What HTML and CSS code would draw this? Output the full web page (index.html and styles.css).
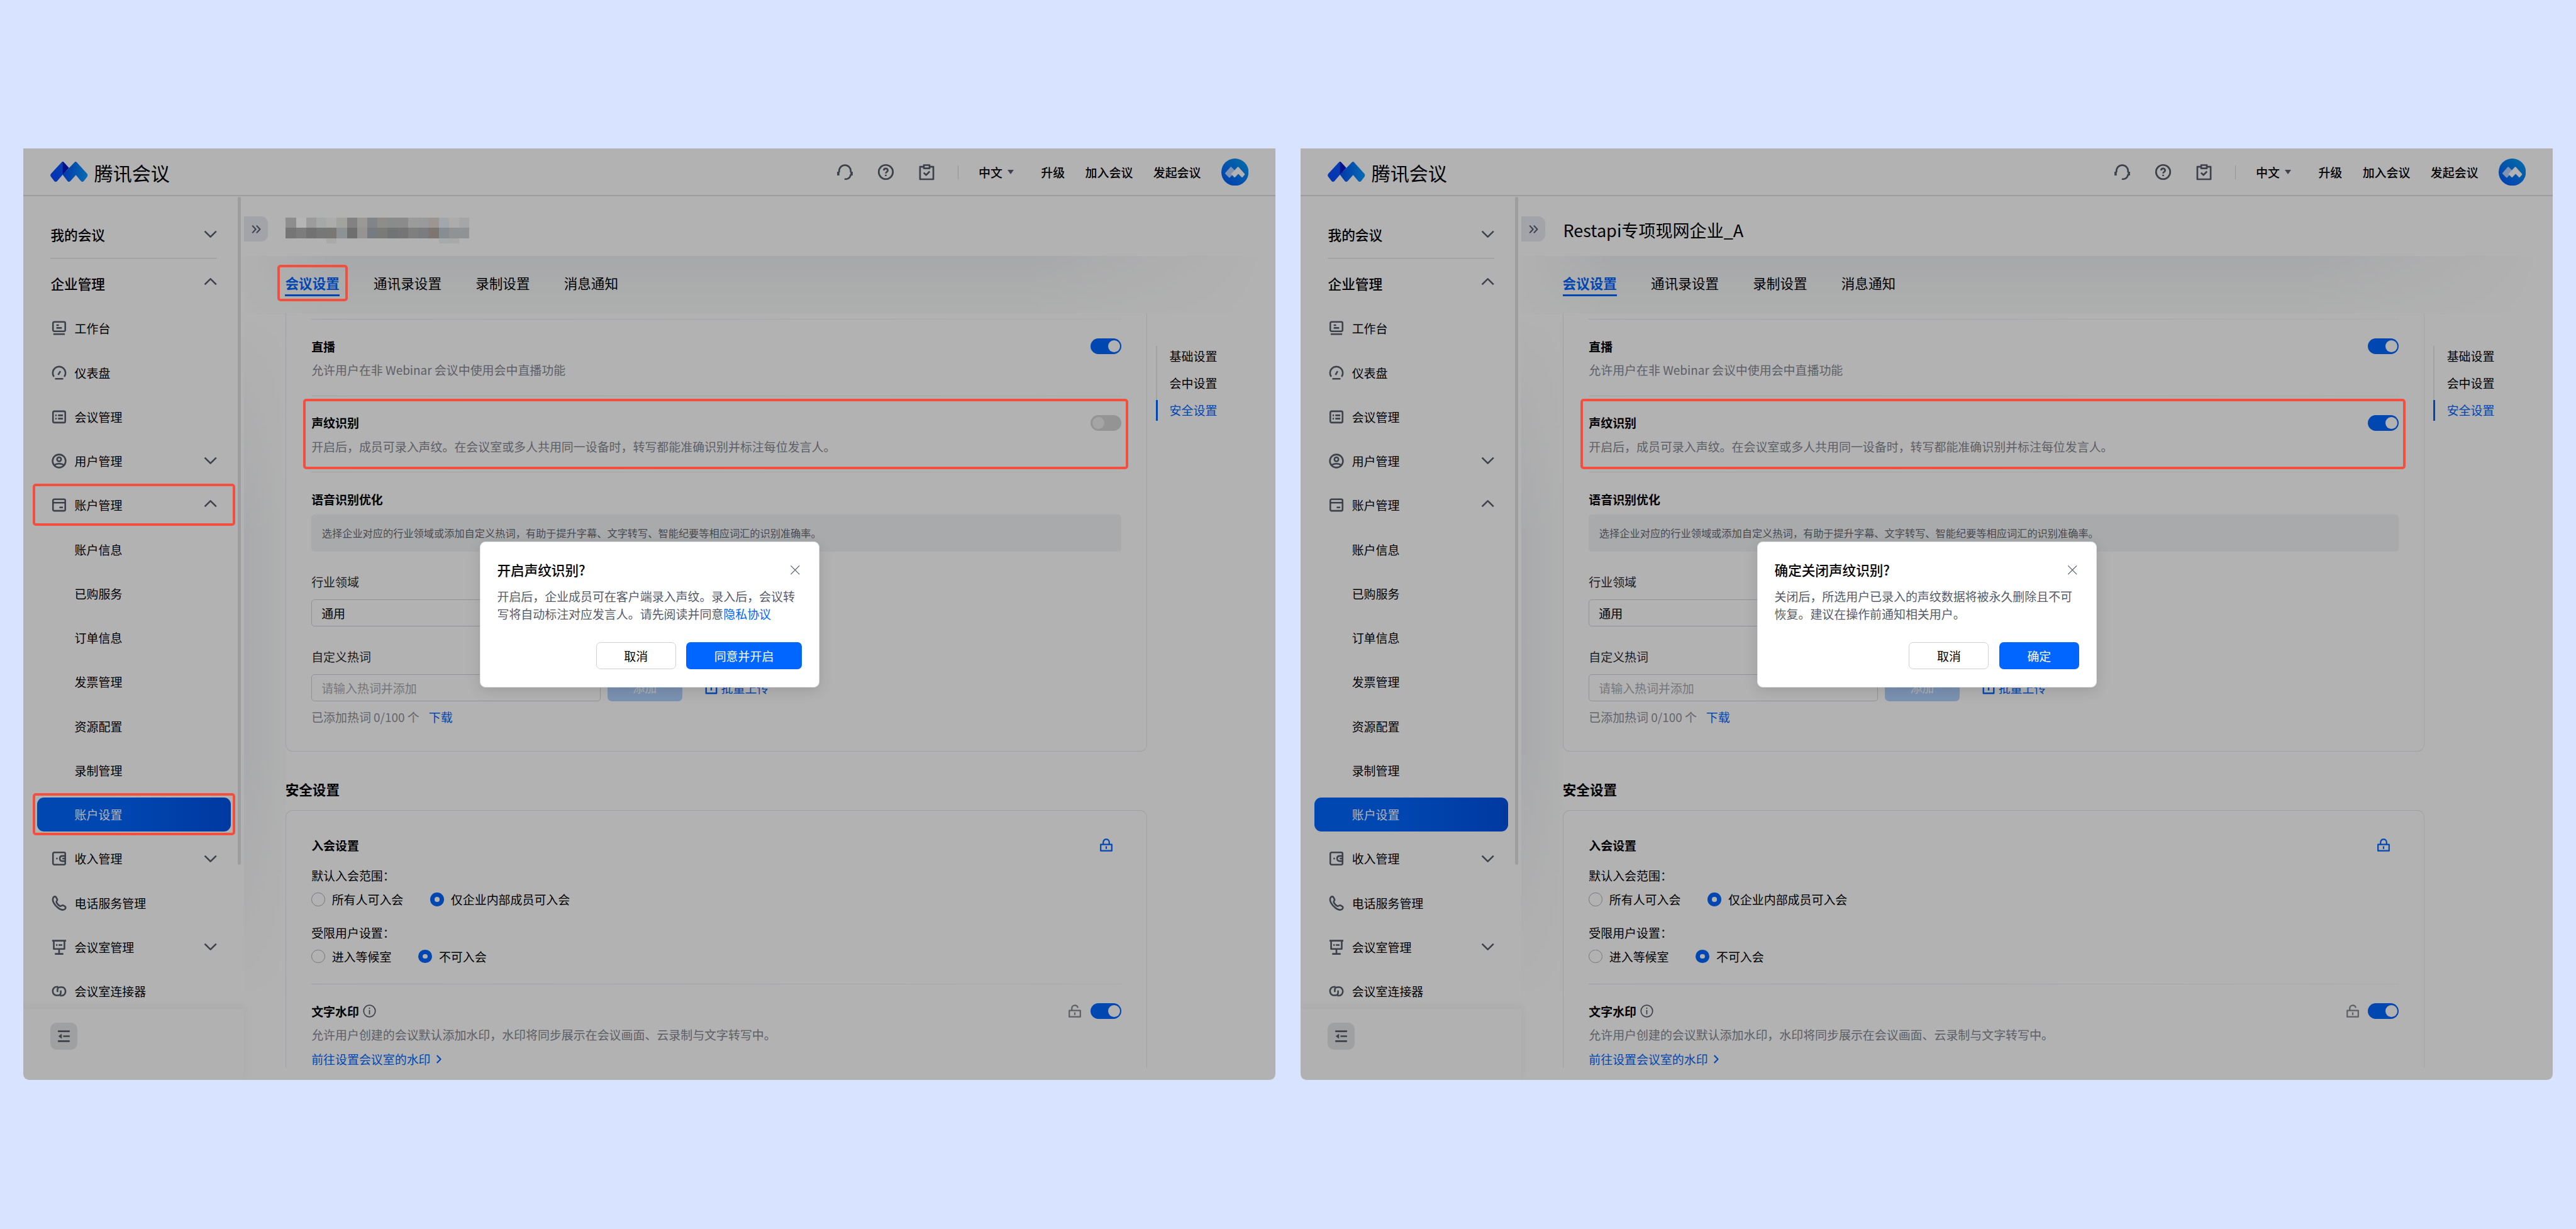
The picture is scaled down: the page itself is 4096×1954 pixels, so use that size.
FILE: index.html
```html
<!DOCTYPE html>
<html lang="zh-CN">
<head>
    <meta charset="UTF-8">
    <meta name="viewport" content="width=device-width, initial-scale=1.0">
    <title>声纹识别设置</title>
    <link rel="stylesheet" href="styles.css">
</head>
<body>
    <!-- icon sprite -->
    <svg class="sprite" width="0" height="0">
        <defs>
            <linearGradient id="g-left" x1="0" y1="1" x2="1" y2="0">
                <stop offset="0" stop-color="#0646ff"/><stop offset="1" stop-color="#0a62ff"/>
            </linearGradient>
            <linearGradient id="g-right" x1="0" y1="0" x2="1" y2="0">
                <stop offset="0" stop-color="#0550f5"/><stop offset="1" stop-color="#0a9cff"/>
            </linearGradient>
            <linearGradient id="g-avatar" x1="0" y1="1" x2="1" y2="0">
                <stop offset="0" stop-color="#0055ff"/><stop offset="1" stop-color="#08a0ee"/>
            </linearGradient>
        </defs>
        <symbol id="i-logo" viewBox="0 0 173 97" preserveAspectRatio="none">
            <path fill="url(#g-left)" d="M52 3Q57-3 62 3L86 30 57 62 32 92Q25 100 18 92L3 72Q-2 65 3 58Z"/>
            <path fill="#0019c8" d="M57 0Q60 0 62 3L86 30 57 62Z"/>
            <path fill="url(#g-right)" d="M112 3Q117-3 122 3L170 58Q175 65 170 72L155 92Q148 100 141 92L118 64 93 92Q86 100 79 92L57 62Z"/>
        </symbol>
        <symbol id="i-headset" viewBox="0 0 24 24">
            <path d="M3.8 12.500V10.500a8.200 8.200 0 0 1 16.400 0V12.500M20.200 15c0 3.400-2.500 6.600-6.200 7h-2.600"/>
            <path d="M2.600 11.600v5.200M21.400 11.600v5.200" stroke-width="3.200"/>
        </symbol>
        <symbol id="i-help" viewBox="0 0 24 24">
            <circle cx="12" cy="12" r="10"/>
            <path d="M9.200 9.700c0-3.600 5.600-3.600 5.600 0 0 2.100-2.800 2.100-2.800 4.300M12 15.800v2"/>
        </symbol>
        <symbol id="i-todo" viewBox="0 0 24 24">
            <path d="M7.500 4.600H2.600v17.600h18.800V4.600h-4.900M8 2.200h8v4.600H8zM7.800 13l3.400 3.300 5-5.200"/>
        </symbol>
        <symbol id="i-down" viewBox="0 0 24 24"><path d="M3.400 7.200 12 15.800l8.600-8.600"/></symbol>
        <symbol id="i-up" viewBox="0 0 24 24"><path d="M3.400 13.600 12 5l8.600 8.600"/></symbol>
        <symbol id="i-desk" viewBox="0 0 24 24">
            <rect x="3" y="2.600" width="18" height="13.800" rx="2"/>
            <path d="M8 7.400h3.600M8 11.400h8M3.600 20.600h16.800"/>
        </symbol>
        <symbol id="i-gauge" viewBox="0 0 24 24">
            <path d="M4.400 17.600A9.400 9.400 0 1 1 19.600 17.600M6 20.600h12M10.600 14.800l3.200-5.400"/>
        </symbol>
        <symbol id="i-list" viewBox="0 0 24 24">
            <rect x="3" y="3.600" width="18" height="16.600" rx="2"/>
            <path d="M6.400 9.600h2M10.400 9.600h7.200M6.400 14.400h2M10.400 14.400h7.200"/>
        </symbol>
        <symbol id="i-user" viewBox="0 0 24 24">
            <circle cx="12" cy="12" r="9.600"/><circle cx="12" cy="9.400" r="3"/>
            <path d="M5.400 18.200c2-3 11.200-3 13.200 0"/>
        </symbol>
        <symbol id="i-card" viewBox="0 0 24 24">
            <rect x="3" y="3.400" width="18" height="17" rx="2"/>
            <path d="M3 8.600h18M12.400 15.400h5.200"/>
        </symbol>
        <symbol id="i-wallet" viewBox="0 0 24 24">
            <rect x="3" y="3" width="18" height="18" rx="2"/>
            <path d="M21 8.200h-4c-2.800 0-4 1.800-4 3.800s1.200 3.800 4 3.800h4M16.800 12H21M7.600 12h2.200"/>
        </symbol>
        <symbol id="i-phone" viewBox="0 0 24 24">
            <path d="M3.600 3.400c1.200-1.600 3.200-1.600 4 0l1.600 3c.8 1.600-1.800 2.600-1.200 4 1 2.600 3 4.600 5.400 5.800 1.600.8 2.800-1.800 4.400-1l2.800 1.600c1.600 1 1 3-.6 4.200-2.400 1.600-5.600.8-9.800-2.400C5.600 15 .6 8 3.600 3.400z"/>
        </symbol>
        <symbol id="i-room" viewBox="0 0 24 24">
            <path d="M1.800 2.400h20.400M4.200 3v11.600h15.600V3M7.400 8.800h2.200M11.200 8.800h5.400M12 14.600v6.600M5.800 21.800h12.400"/>
        </symbol>
        <symbol id="i-link" viewBox="0 0 24 24">
            <path d="M10.800 5.600H8.200c-3 0-5.600 2.600-5.600 6.200s2.600 6.200 5.200 6.200h2.600c2.600 0 4-1.600 4-3.600v-3.600"/>
            <path d="M13.200 18.400h2.600c3 0 5.600-2.600 5.600-6.200s-2.600-6.200-5.200-6.200h-2.600c-2.600 0-4 1.600-4 3.600v3.600"/>
        </symbol>
        <symbol id="i-fold" viewBox="0 0 24 24">
            <path d="M3 4.400h18M11 12h10M3 19.600h18"/><path class="solid" d="M3.600 12l5.200-3.800v7.600z"/>
        </symbol>
        <symbol id="i-expand" viewBox="0 0 24 24"><path d="M4 4.600 11 12l-7 7.400M12.500 4.600l7 7.400-7 7.400"/></symbol>
        <symbol id="i-lock" viewBox="0 0 24 24">
            <path d="M2.400 11h19.200v11H2.400zM6.800 11V7.400C6.800.4 17.200.4 17.200 7.400V11M12 14.200v4.600"/>
        </symbol>
        <symbol id="i-unlock" viewBox="0 0 24 24">
            <path d="M2.400 11h19.200v11H2.400zM6.800 11V7.400c0-7 10.400-7 10.400-.8M12 14.200v4.600"/>
        </symbol>
        <symbol id="i-info" viewBox="0 0 24 24">
            <circle cx="12" cy="12" r="10.600"/><path d="M12 10v8M12 5.800v2.200"/>
        </symbol>
        <symbol id="i-upload" viewBox="0 0 24 24"><path d="M3 11v10h18V11M12 16V3M7.500 7 12 2.600 16.500 7"/></symbol>
        <symbol id="i-right" viewBox="0 0 24 24"><path d="M7 3l9 9-9 9"/></symbol>
        <symbol id="i-close" viewBox="0 0 24 24"><path d="M2 2l20 20M22 2 2 22"/></symbol>
    </svg>

    <div class="stage" id="stage"></div>

    <template id="console-tpl">
        <section class="console">
            <header class="topbar">
                <svg class="logo"><use href="#i-logo"/></svg>
                <span class="brand">腾讯会议</span>
                <nav class="topnav">
                    <svg class="icon top-icon"><use href="#i-headset"/></svg>
                    <svg class="icon top-icon"><use href="#i-help"/></svg>
                    <svg class="icon top-icon"><use href="#i-todo"/></svg>
                    <i class="bar"></i>
                    <span class="lang">中文<i class="caret"></i></span>
                    <span class="upgrade">升级</span>
                    <span>加入会议</span>
                    <span>发起会议</span>
                    <svg class="avatar" viewBox="0 0 44 44">
                        <circle cx="22" cy="22" r="22" fill="url(#g-avatar)"/>
                        <path fill="#b9d2ff" d="M7 24 15.500 14.500 22 21 13 30Z" stroke="#b9d2ff" stroke-width="2" stroke-linejoin="round"/>
                        <path fill="#fff" d="M17 25 27 14.500 37 25.500 33.500 29.500 27.500 23.500 21.500 29.500Z" stroke="#fff" stroke-width="2" stroke-linejoin="round"/>
                    </svg>
                </nav>
            </header>
            <div class="workspace">
                <aside class="sidebar">
                    <nav class="menu">
                        <div class="group">我的会议<svg class="icon arrow"><use href="#i-down"/></svg></div>
                        <div class="group open">企业管理<svg class="icon arrow"><use href="#i-up"/></svg></div>
                        <div class="item"><svg class="icon"><use href="#i-desk"/></svg>工作台</div>
                        <div class="item"><svg class="icon"><use href="#i-gauge"/></svg>仪表盘</div>
                        <div class="item"><svg class="icon"><use href="#i-list"/></svg>会议管理</div>
                        <div class="item"><svg class="icon"><use href="#i-user"/></svg>用户管理<svg class="icon arrow"><use href="#i-down"/></svg></div>
                        <div class="item"><svg class="icon"><use href="#i-card"/></svg>账户管理<svg class="icon arrow"><use href="#i-up"/></svg></div>
                        <div class="item sub">账户信息</div>
                        <div class="item sub">已购服务</div>
                        <div class="item sub">订单信息</div>
                        <div class="item sub">发票管理</div>
                        <div class="item sub">资源配置</div>
                        <div class="item sub">录制管理</div>
                        <div class="item sub active"><span>账户设置</span></div>
                        <div class="item"><svg class="icon"><use href="#i-wallet"/></svg>收入管理<svg class="icon arrow"><use href="#i-down"/></svg></div>
                        <div class="item"><svg class="icon"><use href="#i-phone"/></svg>电话服务管理</div>
                        <div class="item"><svg class="icon"><use href="#i-room"/></svg>会议室管理<svg class="icon arrow"><use href="#i-down"/></svg></div>
                        <div class="item"><svg class="icon"><use href="#i-link"/></svg>会议室连接器</div>
                    </nav>
                    <div class="side-foot">
                        <button class="fold"><svg class="icon"><use href="#i-fold"/></svg></button>
                    </div>
                    <i class="scrollbar"></i>
                </aside>
                <main class="main">
                    <div class="titlebar">
                        <button class="expand"><svg class="icon"><use href="#i-expand"/></svg></button>
                        <div class="title"></div>
                    </div>
                    <div class="page">
                        <div class="tabs">
                            <span class="tab current">会议设置</span>
                            <span class="tab">通讯录设置</span>
                            <span class="tab">录制设置</span>
                            <span class="tab">消息通知</span>
                        </div>
                        <div class="columns">
                            <div class="cards">
                                <div class="card card-meeting">
                                    <div class="row">
                                        <div class="row-head"><b>直播</b><i class="switch on"></i></div>
                                        <p class="desc">允许用户在非 Webinar 会议中使用会中直播功能</p>
                                    </div>
                                    <div class="row">
                                        <div class="row-head"><b>声纹识别</b><i class="switch voice"></i></div>
                                        <p class="desc">开启后，成员可录入声纹。在会议室或多人共用同一设备时，转写都能准确识别并标注每位发言人。</p>
                                    </div>
                                    <div class="row">
                                        <div class="row-head"><b>语音识别优化</b></div>
                                        <p class="notice">选择企业对应的行业领域或添加自定义热词，有助于提升字幕、文字转写、智能纪要等相应词汇的识别准确率。</p>
                                        <div class="label">行业领域</div>
                                        <div class="field">通用</div>
                                        <div class="label">自定义热词</div>
                                        <div class="hotword">
                                            <div class="field empty">请输入热词并添加</div>
                                            <span class="add">添加</span>
                                            <span class="upload"><svg class="icon"><use href="#i-upload"/></svg>批量上传</span>
                                        </div>
                                        <div class="count">已添加热词 0/100 个<a>下载</a></div>
                                    </div>
                                </div>
                                <h2>安全设置</h2>
                                <div class="card card-security">
                                    <div class="row-head"><b>入会设置</b><span class="lock-box"><svg class="icon lock locked"><use href="#i-lock"/></svg></span></div>
                                    <div class="option-name">默认入会范围：</div>
                                    <div class="radios">
                                        <span><i class="radio"></i>所有人可入会</span>
                                        <span><i class="radio checked"></i>仅企业内部成员可入会</span>
                                    </div>
                                    <div class="option-name second">受限用户设置：</div>
                                    <div class="radios">
                                        <span><i class="radio"></i>进入等候室</span>
                                        <span><i class="radio checked"></i>不可入会</span>
                                    </div>
                                    <div class="row watermark">
                                        <div class="row-head">
                                            <b>文字水印</b><svg class="icon info"><use href="#i-info"/></svg>
                                            <svg class="icon lock"><use href="#i-unlock"/></svg><i class="switch on"></i>
                                        </div>
                                        <p class="desc">允许用户创建的会议默认添加水印，水印将同步展示在会议画面、云录制与文字转写中。</p>
                                        <a class="more">前往设置会议室的水印<svg class="icon"><use href="#i-right"/></svg></a>
                                    </div>
                                </div>
                            </div>
                            <nav class="anchors">
                                <span>基础设置</span>
                                <span>会中设置</span>
                                <span class="current">安全设置</span>
                            </nav>
                        </div>
                    </div>
                </main>
            </div>
            <div class="mask"></div>
            <div class="dialog">
                <div class="dialog-head"><span class="dialog-title"></span><svg class="icon"><use href="#i-close"/></svg></div>
                <p class="dialog-text"></p>
                <div class="dialog-foot">
                    <button class="cancel">取消</button>
                    <button class="primary"></button>
                </div>
            </div>
        </section>
    </template>

    <script src="script.js"></script>
</body>
</html>
```
FILE: styles.css
```css
* {
    box-sizing: border-box;
}

body {
    margin: 0;
    width: 4096px;
    height: 1954px;
    overflow: hidden;
    background: #d8e3ff;
    font-family: "Noto Sans CJK SC", "Noto Sans", sans-serif;
    font-size: 18.96px;
    line-height: 28px;
    color: #000;
}

p, h2 {
    margin: 0;
}

i {
    font-style: normal;
}

button {
    padding: 0;
    border: none;
    font: inherit;
}

.sprite {
    position: absolute;
}

.stage {
    display: flex;
    gap: 40.5px;
    padding: 236.2px 37.1px 0;
}

.icon {
    flex: none;
    width: 26px;
    height: 26px;
    fill: none;
    stroke: #565e6c;
    stroke-width: 2.4;
    stroke-linejoin: round;
}

.solid {
    fill: #565e6c;
    stroke: none;
}

.console {
    position: relative;
    flex: none;
    display: flex;
    flex-direction: column;
    width: 1990.6px;
    height: 1480.7px;
    overflow: hidden;
    background: #fff;
    border-radius: 0 0 9px 9px;
}

/* top bar */
.topbar {
    flex: none;
    display: flex;
    align-items: center;
    height: 75.7px;
    padding: 1px 42.5px 0 43px;
    border-bottom: 2px solid #e0e0e0;
}

.logo {
    width: 59.6px;
    height: 32.4px;
    margin-right: 10px;
}

.brand {
    font-size: 30px;
    line-height: 40px;
}

.topnav {
    display: flex;
    align-items: center;
    margin-left: auto;
    gap: 32.4px;
    font-weight: 500;
}

.top-icon {
    width: 27px;
    height: 27px;
    margin-right: 5.6px;
}

.topnav .bar {
    width: 1px;
    height: 22px;
    margin-left: -2px;
    background: #d4d6dc;
}

.lang {
    display: flex;
    align-items: center;
    gap: 8px;
}

.caret {
    border: 5.5px solid transparent;
    border-top: 7px solid #565e6c;
    border-bottom: none;
}

.upgrade {
    margin-left: 11px;
}

.avatar {
    width: 43.3px;
    height: 43.3px;
}

.workspace {
    flex: 1;
    min-height: 0;
    display: flex;
}

/* sidebar */
.sidebar {
    position: relative;
    flex: none;
    display: flex;
    flex-direction: column;
    width: 351.2px;
}

.menu {
    flex: 1;
    min-height: 0;
    overflow: hidden;
    padding-top: 24.1px;
}

.group {
    display: flex;
    align-items: center;
    height: 74.6px;
    margin: 0 43.3px;
    border-bottom: 1px solid #dadada;
    font-size: 21.67px;
    font-weight: 500;
}

.group.open {
    height: 76.6px;
    padding-top: 4px;
    border-bottom: none;
}

.arrow {
    width: 25.4px;
    height: 25.4px;
    margin: 0 -2.2px 0 auto;
}

.item {
    display: flex;
    align-items: center;
    gap: 11.6px;
    height: 70.25px;
    margin: 0 43.3px 0 43.9px;
}

.item.sub {
    padding-left: 37.6px;
}

.item.active {
    margin: 0 21.5px;
    padding: 0;
    color: #fff;
}

.item.active span {
    flex: 1;
    height: 54px;
    line-height: 54px;
    padding-left: 60px;
    border-radius: 11px;
    background: linear-gradient(90deg, #0066ff 40%, #0052e6);
}

.side-foot {
    position: relative;
    flex: none;
    height: 112.7px;
    padding: 21.5px 43.3px;
    background: #fefefe;
    box-shadow: 0 -4px 12px rgba(0, 0, 0, .05);
}

.fold {
    display: flex;
    align-items: center;
    justify-content: center;
    width: 43px;
    height: 43px;
    border-radius: 10px;
    background: #e4e6e9;
}

.fold .icon {
    width: 25px;
    height: 25px;
    stroke-width: 2.6;
}

.scrollbar {
    position: absolute;
    top: 1px;
    right: 5.5px;
    width: 4.5px;
    height: 1062px;
    border-radius: 3px;
    background: #e2e2e2;
}

/* main column */
.main {
    flex: 1;
    min-width: 0;
}

.titlebar {
    display: flex;
    align-items: center;
    height: 94.8px;
    padding-top: 10px;
}

.expand {
    display: flex;
    align-items: center;
    justify-content: center;
    width: 38px;
    height: 40.3px;
    margin-right: 28px;
    border-radius: 0 11px 11px 0;
    background: #eaebf4;
}

.expand .icon {
    width: 19px;
    height: 19px;
    stroke-width: 2.6;
}

.title {
    padding-top: 4px;
    font-size: 27.07px;
    line-height: 40px;
}

/* blurred company name */
.mosaic {
    position: relative;
    z-index: 3;
    display: grid;
    grid-template: 16.3px 16.3px 8px / repeat(18, 16.23px);
}

.page {
    height: 1291.8px;
    overflow: hidden;
    background:
        linear-gradient(100deg, rgba(255, 255, 255, .9) 0, rgba(255, 255, 255, 0) 9%, rgba(255, 255, 255, 0) 75%, #fff 98%) 0 0 / 100% 93px no-repeat,
        linear-gradient(180deg, #f0f1f4, #f9fbfa) 0 0 / 100% 93px no-repeat,
        linear-gradient(180deg, #fff 7%, rgba(255, 255, 255, 0) 35%, rgba(255, 255, 255, 0) 60%, #fff 92%) 0 0 / 66px 100% no-repeat,
        linear-gradient(90deg, #f2f3f7, #fcfdfd) 0 0 / 66px 100% no-repeat,
        #fff;
}

.tabs {
    display: flex;
    align-items: flex-start;
    gap: 54.15px;
    height: 91.8px;
    padding: 28.8px 0 0 65.2px;
    font-size: 21.6px;
    line-height: 30px;
}

.tab.current {
    padding-bottom: 3px;
    border-bottom: 3px solid #0066ff;
    font-weight: 700;
    color: #0066ff;
}

.columns {
    display: flex;
    align-items: flex-start;
    padding-left: 65.4px;
}

.cards {
    width: 1370.4px;
}

.card {
    padding: 0 39.7px 0 40.5px;
    border: 1px solid #e6e7ef;
    border-right-color: #ededef;
    background: #fff;
}

.card-meeting {
    height: 696.4px;
    padding-top: 8.6px;
    border-top: none;
    border-radius: 0 0 11px 11px;
}

.row {
    min-height: 121.7px;
    padding-top: 29.6px;
    background: linear-gradient(90deg, #e4e5ee, #f5f5f5) top / 100% 1px no-repeat;
}

.row-head {
    display: flex;
    align-items: center;
    height: 28px;
}

.row-head b {
    font-weight: 700;
}

.desc {
    margin-top: 9.6px;
    color: #868893;
}

.switch {
    flex: none;
    display: flex;
    width: 49.4px;
    height: 24.6px;
    margin-left: auto;
    padding: 2.7px;
    border-radius: 13px;
    background: #d4d4d4;
}

.switch::before {
    content: "";
    width: 19.2px;
    height: 19.2px;
    border-radius: 50%;
    background: #ececec;
}

.switch.on {
    justify-content: flex-end;
    background: #0066ff;
}

.switch.on::before {
    background: #fff;
}

.notice {
    height: 59px;
    margin-top: 9.5px;
    padding-left: 16.6px;
    border-radius: 5px;
    background: #f3f4f7;
    font-size: 16.22px;
    line-height: 59px;
    color: #686b73;
}

.label {
    margin: 34px 0 14.3px;
    color: #2b2b2f;
}

.field {
    width: 459.8px;
    height: 43px;
    padding-left: 15px;
    border: 1px solid #cfd1d8;
    border-radius: 5px;
    line-height: 41px;
}

.field.empty {
    color: #a9abb3;
}

.hotword {
    display: flex;
    align-items: center;
}

.add {
    width: 118.6px;
    height: 43px;
    margin: 0 35px 0 11px;
    border-radius: 7px;
    background: #b0d1ff;
    line-height: 42px;
    text-align: center;
    color: #fff;
}

.upload {
    display: flex;
    align-items: center;
    gap: 5px;
    color: #0066ff;
}

.upload .icon {
    width: 22px;
    height: 22px;
    stroke: #0066ff;
    stroke-width: 2.6;
}

.count {
    margin-top: 11.3px;
    color: #8f919b;
}

.count a {
    margin-left: 15px;
    color: #0066ff;
}

h2 {
    margin: 45.6px 0 17.5px;
    font-size: 21.6px;
    line-height: 30px;
    font-weight: 700;
}

.card-security {
    height: 600px;
    padding-top: 40.8px;
    border-radius: 11px 11px 0 0;
}

.lock-box {
    display: flex;
    justify-content: center;
    width: 49.4px;
    margin-left: auto;
}

.lock {
    width: 22px;
    height: 23px;
    stroke: #868893;
}

.lock.locked {
    stroke: #0066ff;
}

.option-name {
    margin-top: 20.7px;
}

.option-name.second {
    margin-top: 25.2px;
}

.radios {
    display: flex;
    gap: 43px;
    margin-top: 9.5px;
}

.radios span {
    display: flex;
    align-items: center;
    gap: 11px;
}

.radio {
    width: 21.5px;
    height: 21.5px;
    border: 1px solid #a8aab6;
    border-radius: 50%;
}

.radio.checked {
    border: 7.5px solid #0066ff;
}

.watermark {
    margin-top: 29.4px;
}

.watermark .row-head .info {
    width: 21px;
    height: 21px;
    margin-left: 6px;
    stroke-width: 2;
}

.watermark .lock {
    margin: 0 13.5px 0 auto;
}

.watermark .switch {
    margin-left: 0;
}

.more {
    display: flex;
    align-items: center;
    gap: 5px;
    margin-top: 10.7px;
    color: #0066ff;
}

.more .icon {
    width: 16px;
    height: 16px;
    stroke: #0066ff;
    stroke-width: 3;
}

.anchors {
    display: flex;
    flex-direction: column;
    margin: 51.1px 0 0 14px;
    background: linear-gradient(#e8e9ec, #e8e9ec) 0 0 / 2px 100% no-repeat;
}

.anchors span {
    height: 33px;
    margin-bottom: 10.4px;
    padding-left: 18.5px;
    border-left: 3px solid transparent;
    line-height: 31px;
}

.anchors .current {
    margin-bottom: 0;
    border-color: #0066ff;
    color: #0066ff;
}

/* overlay */
.mask {
    position: absolute;
    inset: 0;
    z-index: 2;
    background: rgba(0, 0, 0, .3);
}

.mark {
    position: absolute;
    z-index: 4;
    border: 4px solid #f44e3f;
    border-radius: 5px;
}

.mark-account {
    left: 15px;
    top: 532.5px;
    width: 321.5px;
    height: 67.5px;
}

.mark-setting {
    left: 15px;
    top: 1024.5px;
    width: 321.5px;
    height: 67.5px;
}

.mark-tab {
    left: 404px;
    top: 185px;
    width: 112px;
    height: 58px;
}

.mark-voice {
    left: 445px;
    top: 397.4px;
    width: 1312px;
    height: 112px;
}

.dialog {
    position: absolute;
    z-index: 5;
    left: 726.2px;
    top: 624.8px;
    width: 539.5px;
    height: 231.7px;
    padding: 0 27px 0 26.2px;
    border: 1px solid #e4e5ea;
    border-radius: 9px;
    background: #fff;
    box-shadow: 0 5px 22px rgba(0, 0, 0, .12);
}

.dialog-head {
    display: flex;
    align-items: center;
    justify-content: space-between;
    height: 30px;
    margin-top: 29px;
    font-size: 21.6px;
    font-weight: 500;
}

.dialog-head .icon {
    width: 16.5px;
    height: 16.5px;
    margin-right: 2px;
    stroke-width: 1.8;
}

.dialog-text {
    margin-top: 13.5px;
    line-height: 27.1px;
    color: #565a68;
}

.dialog-text a {
    color: #0066ff;
}

.dialog-foot {
    display: flex;
    justify-content: flex-end;
    gap: 16.4px;
    margin-top: 32.8px;
}

.dialog-foot button {
    width: 127px;
    height: 43px;
    border-radius: 7px;
    line-height: 42px;
}

.dialog-foot .cancel {
    border: 1px solid #cfd1d8;
    background: #fff;
    line-height: 40px;
    color: #000;
}

.dialog-foot .primary {
    background: #0066ff;
    color: #fff;
}

.dialog-foot .primary.wide {
    width: 183.6px;
}
```
FILE: script.js
```js
const mosaicRows = [
    ['#8e8e8e', '#b5b5b5', '#9c9d9a', '#a5a9a7', '#abacab', '#a3a29f', '#828282', '#9a9996', '#828488', '#8f8d8a', '#898c8b', '#8b8b8b', '#9b9b99', '#989a9c', '#9d9590', '#a2a7ab', '#adacaa', '#a4a6a8'],
    ['#767676', '#7d7c7a', '#727272', '#787778', '#7a7874', '#8d9294', '#6f6f6f', '#969492', '#757b80', '#7a7a76', '#717475', '#757575', '#7f7f7f', '#797d80', '#7d7570', '#878e93', '#919293', '#909396'],
    ['', '', '', '', '#a9a9a9', '', '', '', '', '', '', '', '', '', '', '#a8abac', '#a8aaa9', '']
];

const consoles = [
    {
        title: '<div class="mosaic">' + mosaicRows.flat().map(c => `<i style="background:${c || 'transparent'}"></i>`).join('') + '</div>',
        voiceOn: false,
        marks: ['account', 'setting', 'tab', 'voice'],
        dialogTitle: '开启声纹识别?',
        dialogText: '开启后，企业成员可在客户端录入声纹。录入后，会议转写将自动标注对应发言人。请先阅读并同意<a>隐私协议</a>',
        primary: '同意并开启'
    },
    {
        title: 'Restapi专项现网企业_A',
        voiceOn: true,
        marks: ['voice'],
        dialogTitle: '确定关闭声纹识别?',
        dialogText: '关闭后，所选用户已录入的声纹数据将被永久删除且不可恢复。建议在操作前通知相关用户。',
        primary: '确定'
    }
];

const tpl = document.getElementById('console-tpl');
const stage = document.getElementById('stage');

consoles.forEach(data => {
    const node = tpl.content.cloneNode(true);
    const root = node.querySelector('.console');
    root.querySelector('.title').innerHTML = data.title;
    root.querySelector('.voice').classList.toggle('on', data.voiceOn);
    root.querySelector('.dialog-title').textContent = data.dialogTitle;
    root.querySelector('.dialog-text').innerHTML = data.dialogText;
    const primary = root.querySelector('.primary');
    primary.textContent = data.primary;
    primary.classList.toggle('wide', data.primary.length > 2);
    data.marks.forEach(name => {
        const mark = document.createElement('div');
        mark.className = 'mark mark-' + name;
        root.appendChild(mark);
    });
    stage.appendChild(node);
});
```
